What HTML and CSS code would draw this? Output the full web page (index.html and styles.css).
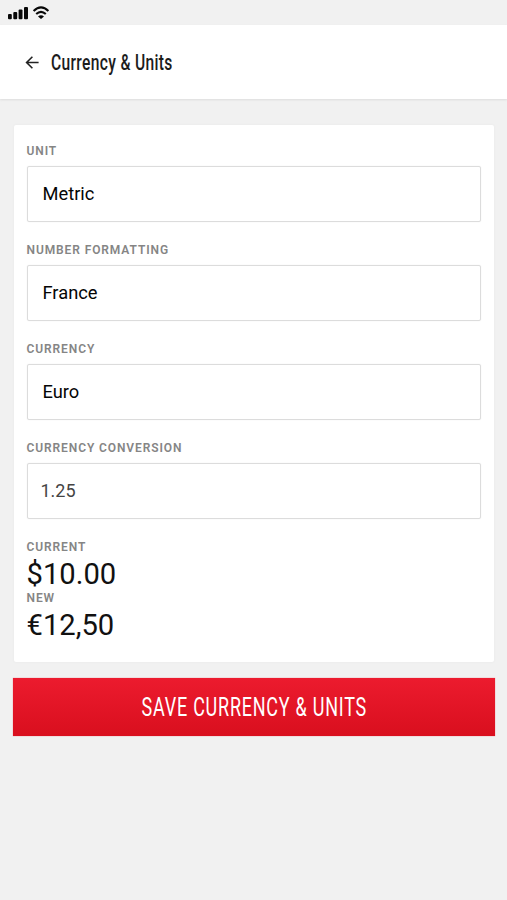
FILE: index.html
```html
<!DOCTYPE html>
<html lang="en">
<head>
<meta charset="utf-8">
<title>Currency &amp; Units</title>
<link rel="stylesheet" href="styles.css">
</head>
<body>
<div class="status">
  <svg width="42" height="16" viewBox="0 0 42 16">
    <g fill="#080808"><rect x="0" y="10" width="3.8" height="5.2" rx="1"/><rect x="5.3" y="8" width="3.9" height="7.2" rx="1"/><rect x="10.6" y="5.5" width="3.9" height="9.7" rx="1"/><rect x="16" y="3" width="4" height="12.2" rx="1"/><path d="M30 12.4Q33 10.2 36 12.4L33 15.1Z"/></g>
    <g fill="none" stroke="#080808" stroke-width="2.1"><path d="M25.6 7Q33 -.2 40.4 7"/><path d="M28.2 10Q33 5.6 37.8 10"/></g>
  </svg>
</div>
<header class="header">
  <svg class="back" width="14" height="14" viewBox="0 0 14 14"><path d="M13.6 6.5H1.8M7.4 .7 1.6 6.5 7.4 12.3" fill="none" stroke="#222" stroke-width="1.6"/></svg>
  <h1 class="title"><svg width="140" height="30"><text transform="scale(.71 1)" x="0" y="22.5" textLength="171" lengthAdjust="spacing">Currency &amp; Units</text></svg></h1>
</header>
<main class="content">
  <section class="card">
    <div class="field"><div class="label">UNIT</div><div class="input">Metric</div></div>
    <div class="field"><div class="label">NUMBER FORMATTING</div><div class="input">France</div></div>
    <div class="field"><div class="label">CURRENCY</div><div class="input">Euro</div></div>
    <div class="field"><div class="label">CURRENCY CONVERSION</div><div class="input number">1.25</div></div>
    <div class="label">CURRENT</div>
    <div class="price">$10.00</div>
    <div class="label">NEW</div>
    <div class="price">€12,50</div>
  </section>
  <button class="save"><svg width="240" height="36"><text transform="scale(.72 1)" x="10.5" y="27" textLength="312" lengthAdjust="spacing">SAVE CURRENCY &amp; UNITS</text></svg></button>
</main>
</body>
</html>
```
FILE: styles.css
```css
* { box-sizing: border-box; }
body { margin: 0; min-height: 900px; background: #f1f1f1; font-family: Roboto, sans-serif; color: #111; }
svg { display: block; overflow: visible; }
.status { height: 25px; padding: 4px 8px; }
.header { height: 74px; background: #fff; display: flex; align-items: center; padding: 2px 25px 0; box-shadow: 0 1px 2px #dcdcdc; }
.title { margin: 0 0 0 12px; font-size: 22px; font-weight: 500; }
.title text { fill: #1c1c1c; }
.content { padding: 26px 12.5px 0 13px; }
.card { height: 537px; margin: 0 1px; padding: 18px 12.5px 0; background: #fff; border-radius: 2px; box-shadow: 0 0 2px #e6e6e6; }
.field { height: 99px; }
.label { height: 15px; font-size: 12px; line-height: 17px; font-weight: 600; letter-spacing: .9px; color: #858585; }
.input { height: 56px; margin-top: 8px; padding: 0 15px 2px; border: 1px solid #dcdcdc; border-radius: 2px; box-shadow: 0 0 1px #ddd; display: flex; align-items: center; font-size: 18.3px; color: #050505; }
.number { padding-left: 13px; color: #444; font-size: 18px; }
.price { height: 36px; line-height: 40px; font-size: 29.2px; }
.save { display: flex; align-items: center; justify-content: center; width: 100%; height: 58px; margin: 16px 0 0; padding: 0; border: 0; background: linear-gradient(#ec1b2e, #d90f1e); box-shadow: 0 0 1px #ed7780; font: 400 25px Roboto, sans-serif; }
.save text { fill: #fff; }
```
